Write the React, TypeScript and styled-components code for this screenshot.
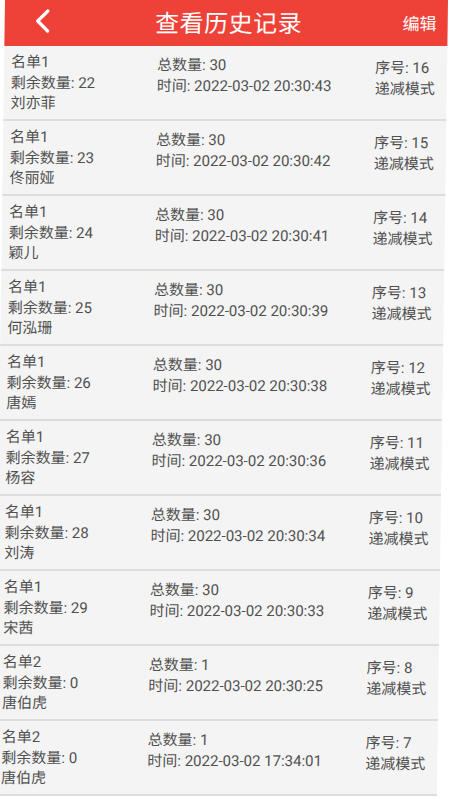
import { createGlobalStyle, styled } from "styled-components";

type Record = {
  list: string;
  left: number;
  name: string;
  total: number;
  time: string;
  index: number;
};

const records: Record[] = [
  { list: "名单1", left: 22, name: "刘亦菲", total: 30, time: "2022-03-02 20:30:43", index: 16 },
  { list: "名单1", left: 23, name: "佟丽娅", total: 30, time: "2022-03-02 20:30:42", index: 15 },
  { list: "名单1", left: 24, name: "颖儿", total: 30, time: "2022-03-02 20:30:41", index: 14 },
  { list: "名单1", left: 25, name: "何泓珊", total: 30, time: "2022-03-02 20:30:39", index: 13 },
  { list: "名单1", left: 26, name: "唐嫣", total: 30, time: "2022-03-02 20:30:38", index: 12 },
  { list: "名单1", left: 27, name: "杨容", total: 30, time: "2022-03-02 20:30:36", index: 11 },
  { list: "名单1", left: 28, name: "刘涛", total: 30, time: "2022-03-02 20:30:34", index: 10 },
  { list: "名单1", left: 29, name: "宋茜", total: 30, time: "2022-03-02 20:30:33", index: 9 },
  { list: "名单2", left: 0, name: "唐伯虎", total: 1, time: "2022-03-02 20:30:25", index: 8 },
  { list: "名单2", left: 0, name: "唐伯虎", total: 1, time: "2022-03-02 17:34:01", index: 7 },
];

const App = () => {
  return (
    <>
      <GlobalStyle />
      <Page>
        <Header>
          <BackButton aria-label="返回">
            <svg width="16" height="24" viewBox="0 0 16 24">
              <path
                d="M13 2 L3 12 L13 22"
                fill="none"
                stroke="#fff"
                strokeWidth="3.2"
                strokeLinecap="round"
                strokeLinejoin="round"
              />
            </svg>
          </BackButton>
          <Title>查看历史记录</Title>
          <EditButton>编辑</EditButton>
        </Header>
        <List>
          {records.map((r) => (
            <Row key={r.index}>
              <Column $offset={0}>
                <Line>{r.list}</Line>
                <Line>剩余数量: {r.left}</Line>
                <Line>{r.name}</Line>
              </Column>
              <Column $offset={3}>
                <Line>总数量: {r.total}</Line>
                <Line>时间: {r.time}</Line>
              </Column>
              <Column $offset={6}>
                <Line>序号: {r.index}</Line>
                <Line>递减模式</Line>
              </Column>
            </Row>
          ))}
        </List>
      </Page>
    </>
  );
};

const GlobalStyle = createGlobalStyle`
  html, body {
    margin: 0;
    padding: 0;
    background: #ffffff;
    overflow: hidden;
  }
  body {
    font-family: Roboto, "Noto Sans CJK SC", sans-serif;
  }
`;

const Page = styled.div`
  width: 443px;
  margin-left: 5px;
  background: #f4f4f4;
  transform-origin: 0 0;
  transform: skewX(-0.8deg);
`;

const Header = styled.div`
  height: 46px;
  background: #ee4137;
  display: flex;
  align-items: center;
  padding: 0 9px 0 30px;
  color: #ffffff;
`;

const BackButton = styled.div`
  width: 20px;
  display: flex;
  align-items: center;
  margin-top: -4px;
`;

const Title = styled.div`
  flex: 1;
  text-align: center;
  font-family: "Noto Sans CJK SC", sans-serif;
  font-size: 24px;
  letter-spacing: 0.5px;
  margin-top: -3px;
`;

const EditButton = styled.div`
  font-family: "Noto Sans CJK SC", sans-serif;
  font-size: 17px;
  margin-top: -1px;
  margin-right: 2px;
`;

const List = styled.div`
  display: flex;
  flex-direction: column;
`;

const Row = styled.div`
  height: 73px;
  display: grid;
  grid-template-columns: 146px 1fr 72px;
  padding-left: 7px;
  border-bottom: 2px solid #dddddd;
  box-sizing: content-box;
`;

const Column = styled.div<{ $offset: number }>`
  display: flex;
  flex-direction: column;
  padding-top: ${(p) => 6 + p.$offset}px;
`;

const Line = styled.div`
  font-size: 15px;
  line-height: 20.5px;
  color: #505050;
  white-space: nowrap;
`;

export default App;
